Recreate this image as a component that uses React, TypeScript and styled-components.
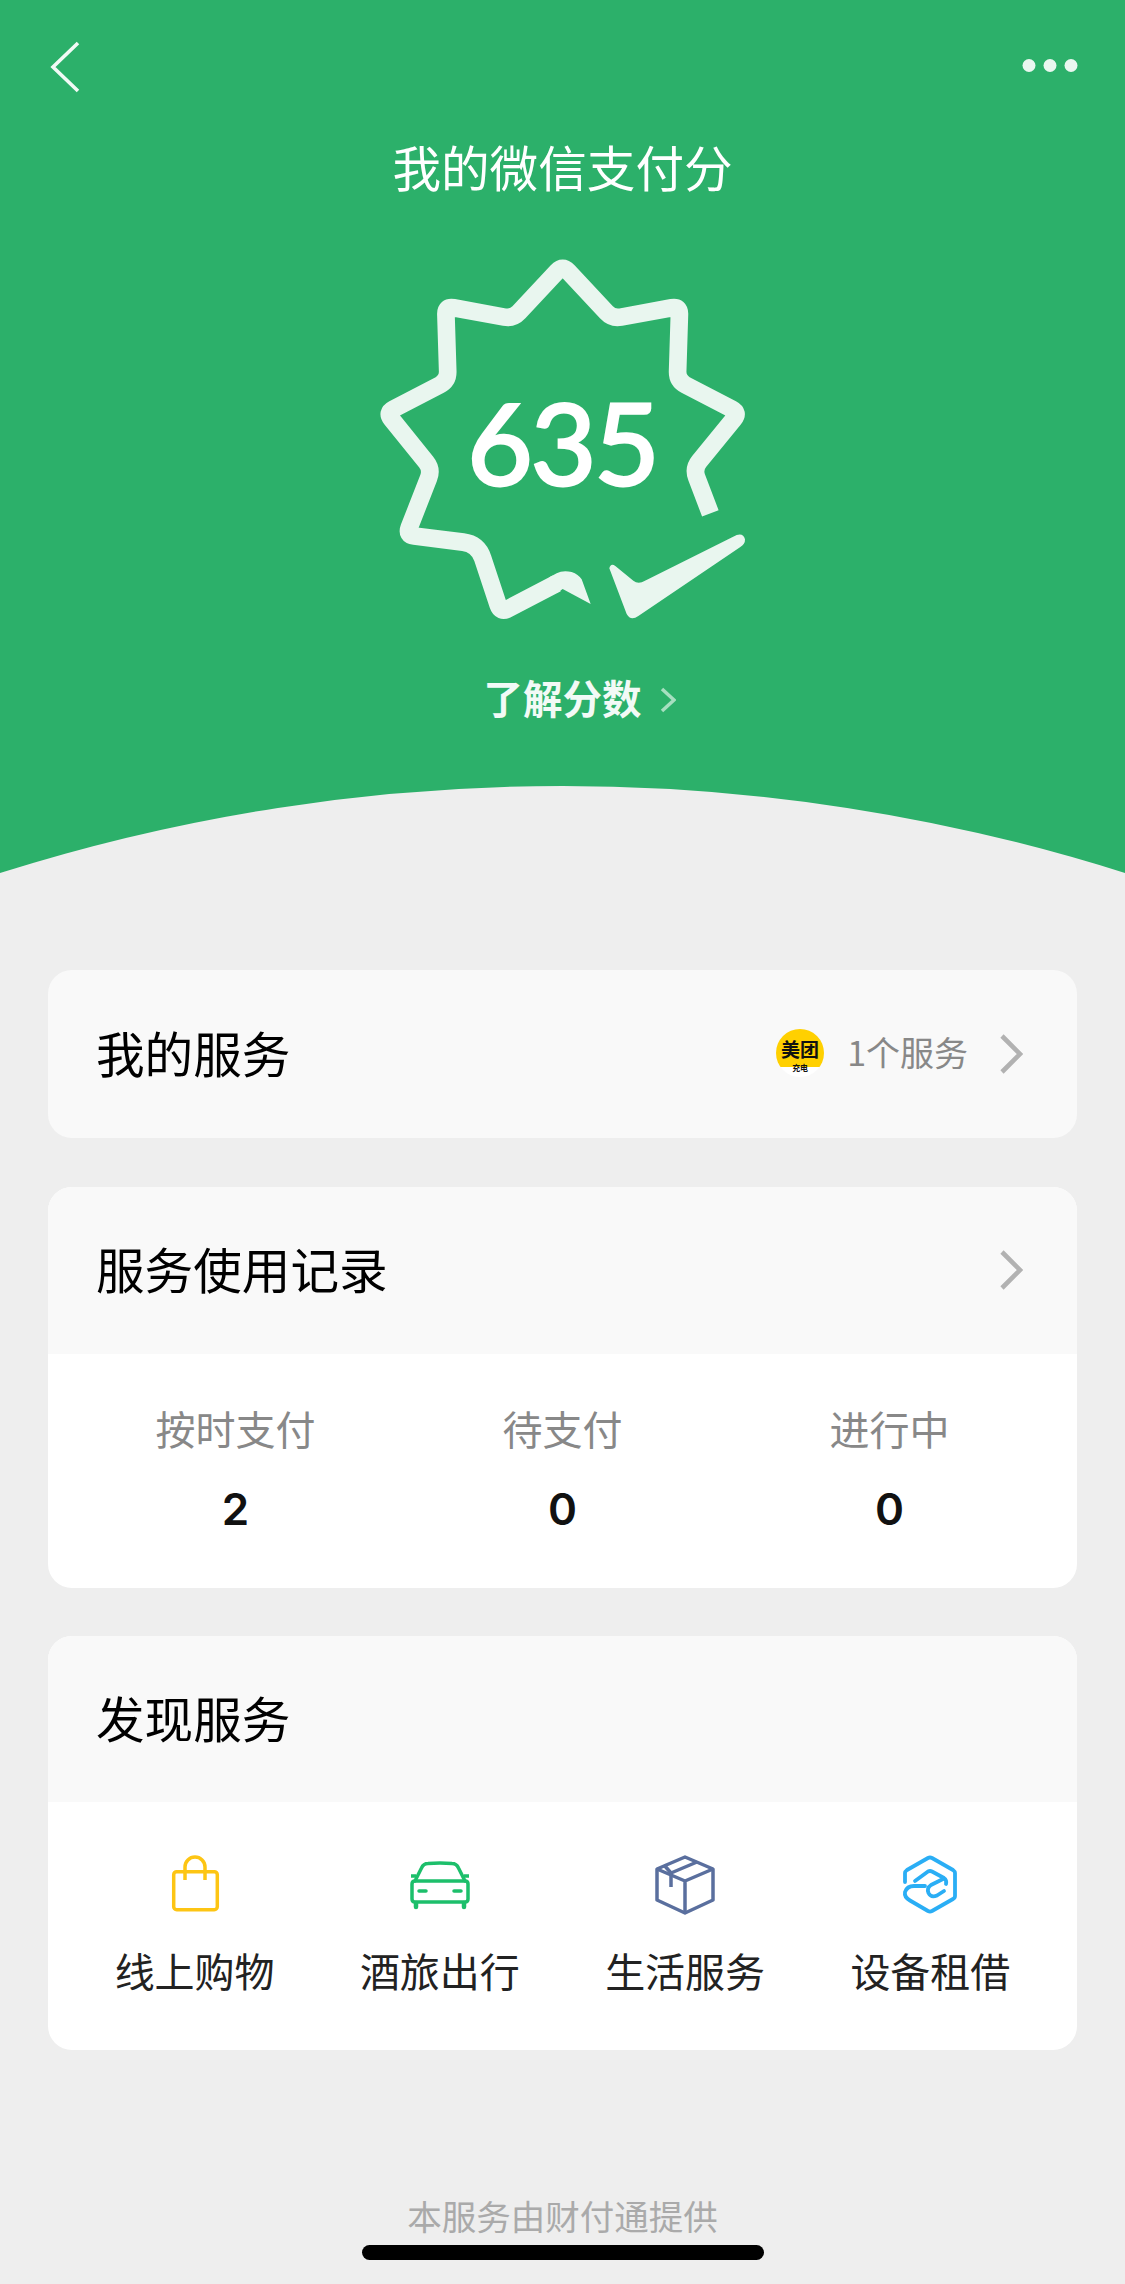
import styled, { createGlobalStyle } from 'styled-components';

const GlobalStyle = createGlobalStyle`
  html, body {
    margin: 0;
    padding: 0;
    background: #eeeeee;
    font-family: "Noto Sans CJK SC", "Noto Sans", sans-serif;
  }
  * {
    box-sizing: border-box;
  }
`;

const Page = styled.div`
  width: 1125px;
  height: 2284px;
  overflow: hidden;
  display: flex;
  flex-direction: column;
  background: #eeeeee;
`;

const Hero = styled.header`
  height: 875px;
  flex: none;
  display: flex;
  flex-direction: column;
  align-items: center;
  background: #2cb06a;
`;

const NavBar = styled.nav`
  width: 100%;
  height: 130px;
  padding: 3px 47px 0 50px;
  display: flex;
  align-items: center;
  justify-content: space-between;
`;

const NavIcon = styled.svg`
  display: block;
`;

const Title = styled.h1`
  margin: 2px 0 0;
  font-size: 48.6px;
  line-height: 68px;
  font-weight: 400;
  color: #ffffff;
`;

const Badge = styled.div`
  position: relative;
  width: 450px;
  height: 420px;
  margin: 20px 0 0 5px;
  flex: none;
`;

const BadgeArt = styled.svg`
  display: block;
`;

const Score = styled.div`
  position: absolute;
  left: 0;
  right: 5px;
  top: 151px;
  text-align: center;
  font-family: Lato, sans-serif;
  font-size: 113px;
  line-height: 140px;
  font-weight: 400;
  letter-spacing: -2px;
  color: #ffffff;
  -webkit-text-stroke: 3px #ffffff;
`;

const LearnMore = styled.a`
  margin-top: 27px;
  padding-left: 34px;
  display: flex;
  align-items: center;
  gap: 18px;
  font-size: 39.5px;
  line-height: 60px;
  font-weight: 700;
  color: #f2faf6;
`;

const LearnChevron = styled.svg`
  display: block;
  margin-top: 6px;
`;

const Arc = styled.svg`
  display: block;
  margin-top: auto;
  flex: none;
`;

const Content = styled.main`
  padding: 95px 48px 0;
  display: flex;
  flex-direction: column;
  gap: 48.5px;
`;

const Card = styled.section`
  border-radius: 24px;
  overflow: hidden;
  background: #ffffff;
`;

const CardHeader = styled.div<{ $height: number }>`
  height: ${(p) => p.$height}px;
  padding: 0 54px 4px 48px;
  display: flex;
  align-items: center;
  justify-content: space-between;
  background: #f9f9f9;
`;

const CardTitle = styled.h2`
  margin: 0;
  font-size: 48.6px;
  line-height: 68px;
  font-weight: 400;
  color: #000000;
`;

const ServiceSummary = styled.div`
  display: flex;
  align-items: center;
`;

const MeituanLogo = styled.div`
  width: 48px;
  height: 48px;
  margin-top: 2px;
  border-radius: 50%;
  overflow: hidden;
  display: flex;
  flex-direction: column;
  align-items: center;
  background: linear-gradient(#ffd000 0 80%, #ffffff 80%);
  color: #111111;
`;

const LogoMark = styled.span`
  margin-top: 9px;
  font-size: 19px;
  line-height: 22px;
  font-weight: 700;
  white-space: nowrap;
`;

const LogoCaption = styled.span`
  margin-top: 3px;
  font-size: 8px;
  line-height: 10px;
  font-weight: 700;
`;

const ServiceCount = styled.span`
  margin-left: 23px;
  font-size: 34px;
  line-height: 48px;
  color: #888888;
`;

const Chevron = styled.svg<{ $gap?: number }>`
  display: block;
  margin-top: 4px;
  margin-left: ${(p) => p.$gap ?? 0}px;
`;

const StatsGrid = styled.div`
  padding: 45px 24px 49px;
  display: grid;
  grid-template-columns: repeat(3, 1fr);
`;

const Stat = styled.div`
  display: flex;
  flex-direction: column;
  align-items: center;
  gap: 22px;
`;

const StatLabel = styled.span`
  font-size: 40px;
  line-height: 58px;
  color: #888888;
`;

const StatValue = styled.span`
  font-family: Inter, sans-serif;
  font-size: 44px;
  line-height: 60px;
  font-weight: 600;
  color: #111111;
`;

const DiscoverGrid = styled.div`
  padding: 51px 24px 51px;
  display: grid;
  grid-template-columns: repeat(4, 1fr);
`;

const Discover = styled.div`
  display: flex;
  flex-direction: column;
  align-items: center;
  gap: 26px;
`;

const DiscoverLabel = styled.span`
  font-size: 40px;
  line-height: 58px;
  color: #222222;
`;

const Footer = styled.footer`
  margin-top: auto;
  padding-bottom: 24px;
  display: flex;
  flex-direction: column;
  align-items: center;
`;

const Provider = styled.span`
  font-size: 34.5px;
  line-height: 48px;
  color: #aaaaaa;
`;

const HomeBar = styled.div`
  width: 402px;
  height: 15px;
  margin-top: 6px;
  border-radius: 8px;
  background: #000000;
`;

type Corner = [number, number, number];

// rounds every corner of an open polyline: [x, y, how far the curve starts from the corner]
const roundedPath = (pts: Corner[]) => {
  const toward = (a: Corner, b: Corner, d: number) => {
    const len = Math.hypot(b[0] - a[0], b[1] - a[1]);
    return `${a[0] + ((b[0] - a[0]) * d) / len} ${a[1] + ((b[1] - a[1]) * d) / len}`;
  };
  return pts
    .map((p, i) => {
      if (i === 0) return `M${p[0]} ${p[1]}`;
      if (i === pts.length - 1) return `L${p[0]} ${p[1]}`;
      return `L${toward(p, pts[i - 1], p[2])} Q${p[0]} ${p[1]} ${toward(p, pts[i + 1], p[2])}`;
    })
    .join(' ');
};

const starOutline = roundedPath([
  [1111, 880, 0],
  [1060, 746, 28],
  [1197, 578, 24],
  [1012, 482, 28],
  [1019, 259, 24],
  [817, 296, 26],
  [668, 136, 24],
  [519, 296, 26],
  [317, 259, 24],
  [324, 482, 28],
  [139, 578, 24],
  [276, 748, 28],
  [199, 945, 24],
  [414, 972, 45],
  [482, 1178, 24],
  [650, 1090, 0],
]);

const ListChevron = ({ gap }: { gap?: number }) => (
  <Chevron $gap={gap} width="24" height="40" viewBox="0 0 24 40" fill="none">
    <path d="M3 2 L21 20 L3 38" stroke="#b2b2b2" strokeWidth="4.6" />
  </Chevron>
);

const stats = [
  { label: '按时支付', value: 2 },
  { label: '待支付', value: 0 },
  { label: '进行中', value: 0 },
];

const BagIcon = () => (
  <svg width="62" height="62" viewBox="0 0 62 62" fill="none" stroke="#fdc514" strokeWidth="3.5" strokeLinejoin="round">
    <rect x="9.7" y="18.7" width="43.6" height="38" rx="3" />
    <path d="M21 27 V14 A10 10 0 0 1 41 14 V27" />
  </svg>
);

const CarIcon = () => (
  <svg width="62" height="62" viewBox="0 0 62 62" fill="none" stroke="#1dbf6b" strokeWidth="3.5" strokeLinecap="round">
    <path d="M6 28 L12.5 15 Q14.5 10.5 19 10.5 Q31 9.5 43 10.5 Q47.5 10.5 49.5 15 L56 28" />
    <path d="M3 31 Q3 28 6 28 H56 Q59 28 59 31 V46 Q59 49 56 49 H6 Q3 49 3 46 Z" />
    <path d="M7 50 V54 M55 50 V54" strokeWidth="4.5" />
    <path d="M2 23 H7 M55 23 H60" strokeLinecap="butt" />
    <path d="M10 38 H17 M45 38 H52" />
  </svg>
);

const BoxIcon = () => (
  <svg width="62" height="62" viewBox="0 0 62 62" fill="none" stroke="#5a6f9e" strokeWidth="3.5" strokeLinejoin="round">
    <path d="M31 4 L59 16 V47 L31 60 L3 47 V16 Z" />
    <path d="M3 16 L31 28 L59 16 M31 28 V60" />
    <path d="M10 12 L17 20 M17 20 L43 9 M17 20 V34" />
  </svg>
);

const HandIcon = () => (
  <svg width="62" height="62" viewBox="0 0 62 62" fill="none" stroke="#2aaef5" strokeWidth="3.8" strokeLinecap="round" strokeLinejoin="round">
    <path d="M6 29 V20 Q6 18.5 8 17 L29 5 Q31 4 33 5 L54 17 Q56 18.5 56 20 V43 Q56 45 54 46 L33 58 Q31 59 29 58 L11 47.5 Q5 44 6 39 Q8 33 15 33 H26" />
    <path d="M16 28 L29 18.5 Q31 17.5 33 18.5 L45 25 Q48 27 47 31" />
    <path d="M45 38 L38 42.5 Q32 45 29.5 40 Q27.5 35 32 32 L44 26" />
  </svg>
);

const services = [
  { label: '线上购物', icon: <BagIcon /> },
  { label: '酒旅出行', icon: <CarIcon /> },
  { label: '生活服务', icon: <BoxIcon /> },
  { label: '设备租借', icon: <HandIcon /> },
];

const App = () => (
  <Page>
    <GlobalStyle />
    <Hero>
      <NavBar>
        <NavIcon width="30" height="52" viewBox="0 0 30 52" fill="none">
          <path d="M28 2 L3 26 L28 50" stroke="#f2faf6" strokeWidth="3.6" />
        </NavIcon>
        <NavIcon width="56" height="16" viewBox="0 0 56 16" fill="#eaf7f0">
          <circle cx="7" cy="6.5" r="6.5" />
          <circle cx="28" cy="6.5" r="6.5" />
          <circle cx="49" cy="6.5" r="6.5" />
        </NavIcon>
      </NavBar>
      <Title>我的微信支付分</Title>
      <Badge>
        <BadgeArt width="450" height="420" viewBox="0 0 1350 1260" fill="none">
          <path d={starOutline} stroke="#e9f6ef" strokeWidth="53" strokeLinejoin="round" />
          <path d="M628 1071.5 L650 1060 Q668 1050 695 1056 Q715 1063 725 1078 L752 1152 L668 1107 L652 1118.5 Z" fill="#e9f6ef" />
          <path
            d="M808 1045 Q812 1028 826 1038 L880 1082 Q895 1094 915 1082 L1190 945 Q1210 938 1215 958 Q1216 972 1200 982 L895 1188 Q872 1204 860 1182 Z"
            fill="#e9f6ef"
          />
        </BadgeArt>
        <Score>635</Score>
      </Badge>
      <LearnMore>
        了解分数
        <LearnChevron width="16" height="26" viewBox="0 0 16 26" fill="none">
          <path d="M2 2 L14 13 L2 24" stroke="#a6dfc0" strokeWidth="3.5" />
        </LearnChevron>
      </LearnMore>
      <Arc width="1125" height="89" viewBox="0 0 1125 89">
        <path d="M0 87 A1862 1862 0 0 1 1125 87 V89 H0 Z" fill="#eeeeee" />
      </Arc>
    </Hero>
    <Content>
      <Card>
        <CardHeader $height={168}>
          <CardTitle>我的服务</CardTitle>
          <ServiceSummary>
            <MeituanLogo>
              <LogoMark>美团</LogoMark>
              <LogoCaption>充电</LogoCaption>
            </MeituanLogo>
            <ServiceCount>1个服务</ServiceCount>
            <ListChevron gap={31} />
          </ServiceSummary>
        </CardHeader>
      </Card>
      <Card>
        <CardHeader $height={167}>
          <CardTitle>服务使用记录</CardTitle>
          <ListChevron />
        </CardHeader>
        <StatsGrid>
          {stats.map((stat) => (
            <Stat key={stat.label}>
              <StatLabel>{stat.label}</StatLabel>
              <StatValue>{stat.value}</StatValue>
            </Stat>
          ))}
        </StatsGrid>
      </Card>
      <Card>
        <CardHeader $height={166}>
          <CardTitle>发现服务</CardTitle>
        </CardHeader>
        <DiscoverGrid>
          {services.map((service) => (
            <Discover key={service.label}>
              {service.icon}
              <DiscoverLabel>{service.label}</DiscoverLabel>
            </Discover>
          ))}
        </DiscoverGrid>
      </Card>
    </Content>
    <Footer>
      <Provider>本服务由财付通提供</Provider>
      <HomeBar />
    </Footer>
  </Page>
);

export default App;
